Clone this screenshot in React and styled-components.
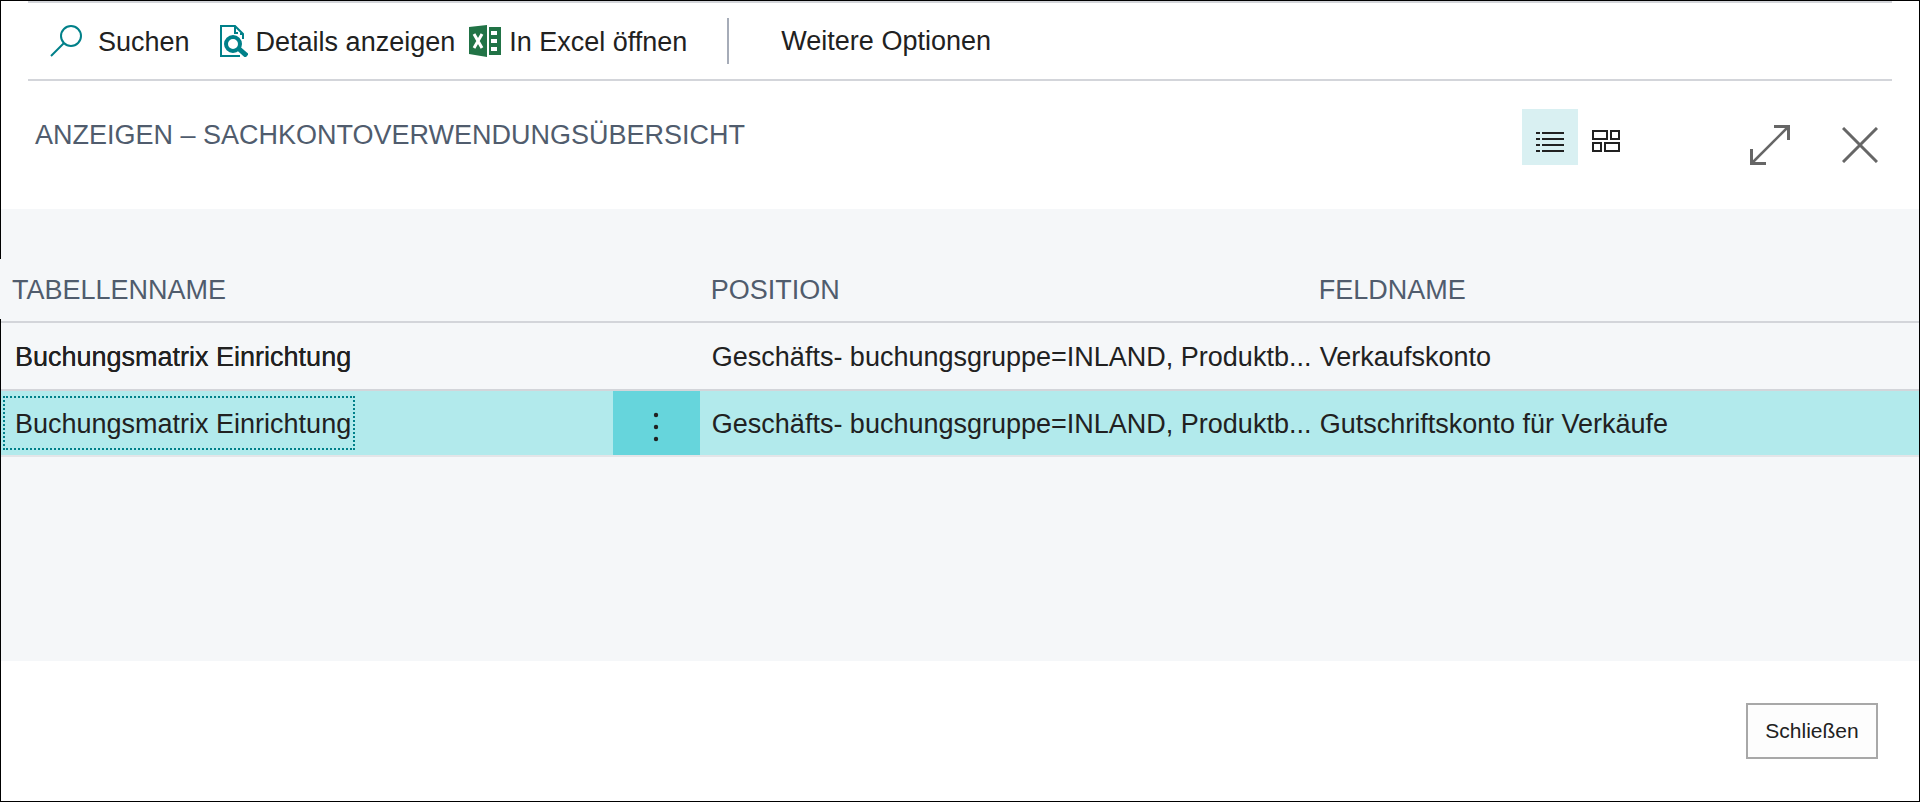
import React from "react";
import styled, { createGlobalStyle } from "styled-components";

const GlobalStyle = createGlobalStyle`
    * {
        box-sizing: border-box;
    }

    body {
        margin: 0;
        background-color: #fff;
        color: #212121;
        font-family: "Liberation Sans", Arial, sans-serif;
        font-size: 27px;
        line-height: 32px;
    }
`;

const Dialog = styled.main`
    display: flex;
    flex-direction: column;
    min-height: 100vh;
    border: 1px solid #000;
`;

const Toolbar = styled.nav`
    display: flex;
    align-items: center;
    height: 80px;
    margin: 0 27px;
    padding: 0 22px;
    border-top: 2px solid #d3d5da;
    border-bottom: 2px solid #d3d5da;
`;

const Button = styled.button`
    display: flex;
    align-items: center;
    justify-content: center;
    padding: 0;
    border: none;
    background: none;
    color: inherit;
    font: inherit;
    white-space: nowrap;
    cursor: pointer;
`;

const Action = styled(Button)`
    gap: ${(props) => props.$gap || 8}px;
    margin-right: ${(props) => props.$space || 0}px;
`;

const Label = styled.span`
    padding-top: 2px;
`;

const Separator = styled.span`
    width: 2px;
    height: 46px;
    margin-right: 52px;
    background-color: #a6acb8;
`;

const Header = styled.header`
    display: flex;
    align-items: flex-start;
    height: 128px;
    padding: 28px 34px 0;
`;

const Title = styled.h1`
    flex: 1;
    margin: 10px 0 0;
    color: #505c6d;
    font-size: 27px;
    font-weight: normal;
`;

const ViewButton = styled(Button)`
    width: 56px;
    height: 56px;
    padding-top: 8px;
    background-color: ${(props) => (props.$active ? "#d9f0f2" : "transparent")};
`;

const WindowButtons = styled.div`
    display: flex;
    align-items: center;
    gap: 52px;
    height: 56px;
    margin: 8px 7px 0 116px;
`;

const Panel = styled.section`
    flex: 1;
    padding-top: 50px;
    background-color: #f5f7f9;
`;

const Table = styled.table`
    width: 100%;
    border-collapse: separate;
    border-spacing: 0;
    table-layout: fixed;
`;

const Col = styled.col`
    width: ${(props) => props.$width};
`;

const Th = styled.th`
    padding: 0;
    border-bottom: 2px solid #d3d5da;
    color: #505c6d;
    font-weight: normal;
    text-align: left;
`;

// the first heading runs over the dialog's left border
const HeadLabel = styled.div`
    height: 60px;
    margin-bottom: 2px;
    padding: 15px 11px 0;
    box-shadow: ${(props) => (props.$first ? "-1px 0 0 #f5f7f9" : "none")};
`;

const Tr = styled.tr`
    height: ${(props) => (props.$selected ? 66 : 68)}px;
    background-color: ${(props) => (props.$selected ? "#b2eaec" : "transparent")};
`;

const Td = styled.td`
    padding: 2px 0 0 12px;
    border-bottom: 2px solid ${(props) => (props.$selected ? "#e3e5e8" : "#d3d5da")};
    white-space: nowrap;
`;

const NameTd = styled(Td)`
    padding: 0 2px;
`;

const MenuTd = styled(Td)`
    padding: 0;
    background-color: ${(props) => (props.$selected ? "#66d5dc" : "transparent")};
`;

const MenuButton = styled(Button)`
    width: 100%;
    height: 64px;
    padding-top: 8px;
`;

const Name = styled.div`
    width: fit-content;
    padding: 10px 2px 8px 10px;
    border: 2px dotted ${(props) => (props.$selected ? "#008089" : "transparent")};
    text-shadow: ${(props) => (props.$selected ? "none" : "0 0 0 #212121")};
`;

const Footer = styled.footer`
    display: flex;
    justify-content: flex-end;
    align-items: flex-start;
    height: 140px;
    padding: 42px 41px 0;
`;

const CloseButton = styled(Button)`
    width: 132px;
    height: 56px;
    border: 2px solid #a8a8a8;
    background-color: #fdfdfd;
    font-size: 21px;
`;

const SearchIcon = () => (
    <svg width="32" height="32" fill="none" stroke="#008089" strokeWidth="2" aria-hidden="true">
        <circle cx="21" cy="11" r="10" />
        <path d="M14 18L1 31" />
    </svg>
);

const DetailsIcon = () => (
    <svg width="28" height="32" fill="none" stroke="#008089" strokeWidth="2" aria-hidden="true">
        <path d="M20 31H1V1H15L23 9V14" />
        <path d="M15 2V8H18M20 9H23" />
        <circle cx="13" cy="19" r="7" strokeWidth="4" />
        <path d="M18 23L27 31" strokeWidth="5" />
    </svg>
);

const ExcelIcon = () => (
    <svg width="32" height="32" aria-hidden="true">
        <path d="M0 2L18 0V32L0 29Z" fill="#217346" />
        <path d="M20 2H32V30H20Z" fill="#217346" />
        <path d="M22 6H28V10H22ZM22 14H28V18H22ZM22 22H28V26H22Z" fill="#fff" />
        <path d="M5 9L13 23M13 9L5 23" stroke="#fff" strokeWidth="3" />
    </svg>
);

const ListIcon = () => (
    <svg width="28" height="22" fill="#212121" aria-hidden="true">
        <path d="M0 2H4V4H0ZM6 2H28V4H6ZM0 8H4V10H0ZM6 8H28V10H6ZM0 14H4V16H0ZM6 14H28V16H6ZM0 20H4V22H0ZM6 20H28V22H6Z" />
    </svg>
);

const TilesIcon = () => (
    <svg width="28" height="22" fill="none" stroke="#212121" strokeWidth="2" aria-hidden="true">
        <path d="M1 1H15V9H1ZM19 1H27V9H19ZM1 13H9V21H1ZM13 13H27V21H13Z" />
    </svg>
);

const ExpandIcon = () => (
    <svg width="40" height="40" fill="none" stroke="#666" strokeWidth="3" aria-hidden="true">
        <path d="M24 1.500H38.500V15M1.500 24V38.500H16" />
        <path d="M2 38L38 2" strokeWidth="2.500" />
    </svg>
);

const CloseIcon = () => (
    <svg width="36" height="36" fill="none" stroke="#666" strokeWidth="3" aria-hidden="true">
        <path d="M1 1L35 35M35 1L1 35" />
    </svg>
);

const DotsIcon = () => (
    <svg width="6" height="30" fill="#212121" aria-hidden="true">
        <circle cx="3" cy="3" r="2.200" />
        <circle cx="3" cy="15" r="2.200" />
        <circle cx="3" cy="27" r="2.200" />
    </svg>
);

const rows = [
    {
        name: "Buchungsmatrix Einrichtung",
        position: "Geschäfts- buchungsgruppe=INLAND, Produktb...",
        field: "Verkaufskonto",
    },
    {
        name: "Buchungsmatrix Einrichtung",
        position: "Geschäfts- buchungsgruppe=INLAND, Produktb...",
        field: "Gutschriftskonto für Verkäufe",
        selected: true,
    },
];

const App = () => {
    return (
        <>
            <GlobalStyle />
            <Dialog>
                <Toolbar>
                    <Action $gap={16} $space={30}><SearchIcon /><Label>Suchen</Label></Action>
                    <Action $space={14}><DetailsIcon /><Label>Details anzeigen</Label></Action>
                    <Action $space={40}><ExcelIcon /><Label>In Excel öffnen</Label></Action>
                    <Separator />
                    <Action>Weitere Optionen</Action>
                </Toolbar>
                <Header>
                    <Title>ANZEIGEN – SACHKONTOVERWENDUNGSÜBERSICHT</Title>
                    <ViewButton $active aria-label="Liste"><ListIcon /></ViewButton>
                    <ViewButton aria-label="Kacheln"><TilesIcon /></ViewButton>
                    <WindowButtons>
                        <Button aria-label="Vergrößern"><ExpandIcon /></Button>
                        <Button aria-label="Fenster schließen"><CloseIcon /></Button>
                    </WindowButtons>
                </Header>
                <Panel>
                    <Table>
                        <colgroup>
                            <Col $width="31.9%" />
                            <Col $width="87px" />
                            <Col $width="31.7%" />
                            <Col />
                        </colgroup>
                        <thead>
                            <tr>
                                <Th><HeadLabel $first>TABELLENNAME</HeadLabel></Th>
                                <Th aria-label="Menü" />
                                <Th><HeadLabel>POSITION</HeadLabel></Th>
                                <Th><HeadLabel>FELDNAME</HeadLabel></Th>
                            </tr>
                        </thead>
                        <tbody>
                            {rows.map((item, i) => (
                                <Tr key={i} $selected={item.selected}>
                                    <NameTd $selected={item.selected}>
                                        <Name $selected={item.selected}>{item.name}</Name>
                                    </NameTd>
                                    <MenuTd $selected={item.selected}>
                                        {item.selected && (
                                            <MenuButton aria-label="Weitere Optionen anzeigen"><DotsIcon /></MenuButton>
                                        )}
                                    </MenuTd>
                                    <Td $selected={item.selected}>{item.position}</Td>
                                    <Td $selected={item.selected}>{item.field}</Td>
                                </Tr>
                            ))}
                        </tbody>
                    </Table>
                </Panel>
                <Footer>
                    <CloseButton>Schließen</CloseButton>
                </Footer>
            </Dialog>
        </>
    );
};

export default App;
